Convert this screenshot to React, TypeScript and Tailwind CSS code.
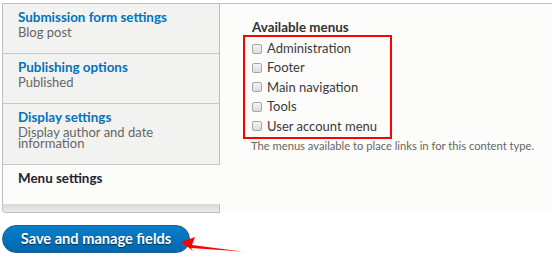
const tabs = [
  { title: "Submission form settings", summary: "Blog post" },
  { title: "Publishing options", summary: "Published" },
  { title: "Display settings", summary: "Display author and date information" },
];

const menus = ["Administration", "Footer", "Main navigation", "Tools", "User account menu"];

function Checkbox() {
  return (
    <span className="block h-[10px] w-[10px] shrink-0 rounded-[2px] border border-[#a6a6a6] bg-gradient-to-b from-[#f4f4f4] to-[#dcdcdc]" />
  );
}

export default function App() {
  return (
    <div className="relative h-[267px] w-[552px] overflow-hidden bg-white pl-[2px] pt-[3px] font-['Lato',sans-serif]">
      <div className="flex h-[210px] border-t border-[#c0c0c0]">
        {/* vertical tabs */}
        <ul className="flex w-[218px] shrink-0 flex-col rounded-bl-[4px] border-b border-l border-r border-[#bfbfbf] bg-[#f2f2f0]">
          {tabs.map((tab) => (
            <li key={tab.title} className="border-b border-[#c8c8c8] pb-[15px] pl-[15px] pr-[15px] pt-[5px]">
              <div className="text-[13.4px] font-bold leading-[16px] text-[#0074bd]">{tab.title}</div>
              <div className="mt-[2px] text-[13px] leading-[11px] text-[#666]">{tab.summary}</div>
            </li>
          ))}
          <li className="relative z-10 -mr-[2px] h-[39px] bg-[#fcfcfa] pl-[15px] pt-[5px]">
            <div className="text-[13.4px] font-bold leading-[16px] text-[#222330]">Menu settings</div>
          </li>
          <li className="flex-1 rounded-bl-[3px] bg-gradient-to-b from-[#d9d9d7] to-[#ebebe9]" />
        </ul>

        {/* panel */}
        <div className="flex-1 bg-[#fcfcfa] pl-[32px] pt-[15px]">
          <div className="text-[13.4px] font-bold leading-[16px] text-[#333]">Available menus</div>
          <div className="-ml-[9px] w-[149px] border-2 border-[#f00] pb-[1px] pl-[7px] pt-[2px]">
            {menus.map((m) => (
              <label key={m} className="flex h-[19.4px] items-center gap-[5px] text-[13px] text-[#3b3b3b]">
                <Checkbox />
                {m}
              </label>
            ))}
          </div>
          <p className="-ml-[1px] text-[11.2px] leading-[14px] text-[#666]">
            The menus available to place links in for this content type.
          </p>
        </div>
      </div>

      <button className="mt-[12px] flex h-[28px] w-[188px] items-center justify-center rounded-full border border-[#1e5f95] bg-gradient-to-b from-[#0a7ecb] to-[#0068ad] text-[14.6px] font-bold text-white [text-shadow:0_1px_1px_rgba(0,0,0,0.6)]">
        Save and manage fields
      </button>

      {/* annotation arrow */}
      <svg className="pointer-events-none absolute left-0 top-0" width="552" height="267" viewBox="0 0 552 267">
        <polygon points="181,242 195,237 192,245 242,251.5 191,248 193,251" fill="#f00" />
      </svg>
    </div>
  );
}
